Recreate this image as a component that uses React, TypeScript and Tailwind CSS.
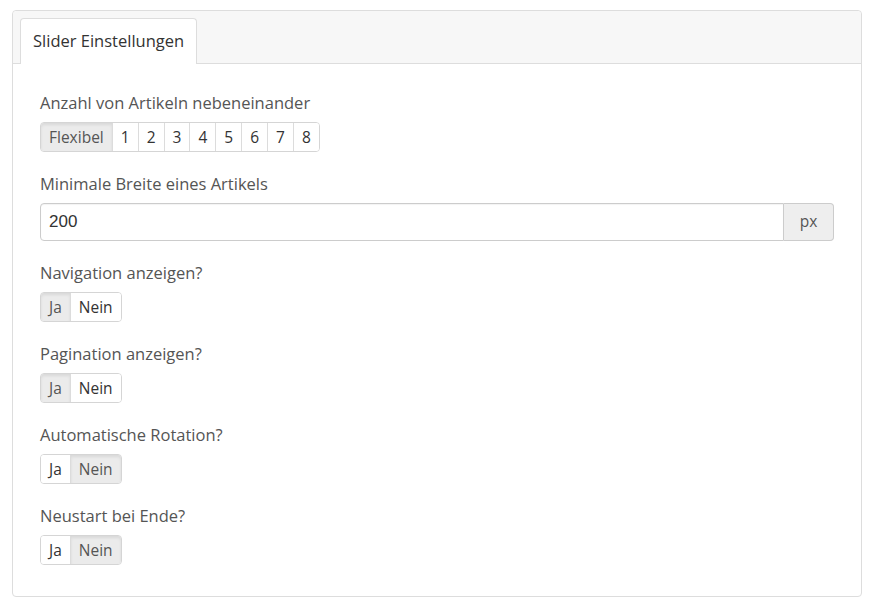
import { useState } from 'react';

const COUNTS = ['Flexibel', '1', '2', '3', '4', '5', '6', '7', '8'];

function Toggle({
  options,
  value,
  onChange,
}: {
  options: string[];
  value: string;
  onChange: (v: string) => void;
}) {
  return (
    <div className="inline-flex rounded-[4px] border border-[#d5d5d5] bg-white">
      {options.map((opt, i) => {
        const active = opt === value;
        return (
          <button
            key={opt}
            onClick={() => onChange(opt)}
            className={`h-[28px] px-[8px] text-[15.5px] leading-[28px] ${
              i > 0 ? 'border-l border-[#dcdcdc]' : ''
            } ${i === 0 ? 'rounded-l-[3px]' : ''} ${
              i === options.length - 1 ? 'rounded-r-[3px]' : ''
            } ${
              active
                ? 'bg-[#ebebeb] text-[#555] shadow-[inset_0_2px_3px_rgba(0,0,0,0.08)]'
                : 'bg-white text-[#333]'
            }`}
          >
            {opt}
          </button>
        );
      })}
    </div>
  );
}

function Field({ label, children }: { label: string; children: React.ReactNode }) {
  return (
    <div className="mb-[21px]">
      <div className="mb-[8px] h-[22px] text-[16.5px] leading-[22px] text-[#555]">{label}</div>
      {children}
    </div>
  );
}

export default function App() {
  const [count, setCount] = useState('Flexibel');
  const [width, setWidth] = useState('200');
  const [nav, setNav] = useState('Ja');
  const [pag, setPag] = useState('Ja');
  const [auto, setAuto] = useState('Nein');
  const [loop, setLoop] = useState('Nein');

  return (
    <div
      className="min-h-[607px] bg-white pt-[10px] pl-[12px] pr-[13px]"
      style={{ fontFamily: '"Open Sans", "Noto Sans", sans-serif' }}
    >
      <div className="rounded-[4px] border border-[#dddddd] bg-white">
        {/* Tab header */}
        <div className="flex h-[53px] items-end rounded-t-[4px] border-b border-[#dddddd] bg-[#f7f7f7] pl-[7px]">
          <div className="-mb-px flex h-[46px] items-center rounded-t-[4px] border border-b-0 border-[#dddddd] bg-white px-[12px] text-[16.5px] text-[#333]">
            Slider Einstellungen
          </div>
        </div>

        {/* Form body */}
        <div className="pt-[28px] pl-[27px] pr-[27px] pb-[10px]">
          <Field label="Anzahl von Artikeln nebeneinander">
            <Toggle options={COUNTS} value={count} onChange={setCount} />
          </Field>

          <Field label="Minimale Breite eines Artikels">
            <div className="flex h-[38px]">
              <input
                value={width}
                onChange={(e) => setWidth(e.target.value)}
                className="min-w-0 flex-1 rounded-l-[4px] border border-[#cccccc] bg-white px-[8px] text-[17px] text-[#333] outline-none shadow-[inset_0_1px_1px_rgba(0,0,0,0.05)]"
                style={{ fontFamily: '"Liberation Sans", Arial, sans-serif' }}
              />
              <div className="flex w-[50px] items-center justify-center rounded-r-[4px] border border-l-0 border-[#cccccc] bg-[#eeeeee] text-[15.5px] text-[#555]">
                px
              </div>
            </div>
          </Field>

          <Field label="Navigation anzeigen?">
            <Toggle options={['Ja', 'Nein']} value={nav} onChange={setNav} />
          </Field>

          <Field label="Pagination anzeigen?">
            <Toggle options={['Ja', 'Nein']} value={pag} onChange={setPag} />
          </Field>

          <Field label="Automatische Rotation?">
            <Toggle options={['Ja', 'Nein']} value={auto} onChange={setAuto} />
          </Field>

          <Field label="Neustart bei Ende?">
            <Toggle options={['Ja', 'Nein']} value={loop} onChange={setLoop} />
          </Field>
        </div>
      </div>
    </div>
  );
}
